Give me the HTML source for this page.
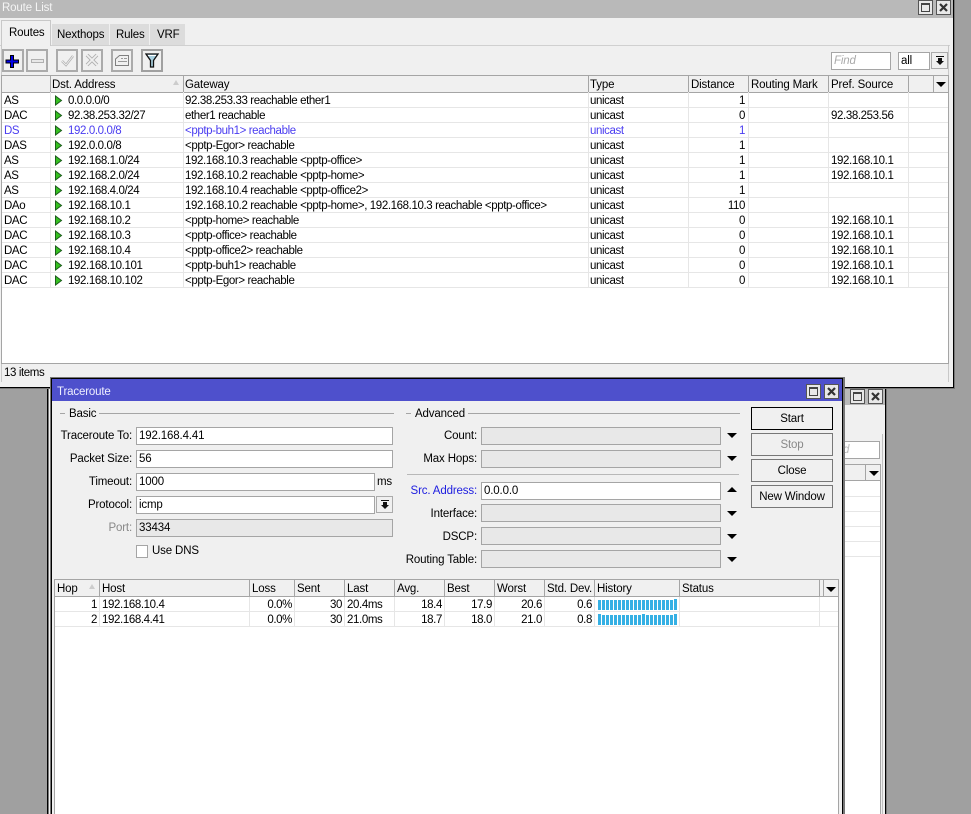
<!DOCTYPE html>
<html><head><meta charset="utf-8"><style>
html,body{margin:0;padding:0;width:971px;height:814px;overflow:hidden;background:#a0a0a0}
body{position:relative;font:11.5px/15px "Liberation Sans",sans-serif;color:#000;letter-spacing:-.39px}
div,span,svg{position:absolute;box-sizing:border-box}
span{white-space:nowrap}
.r{text-align:right}
.z{letter-spacing:-.15px}
.hl{height:1px;background:#e6e6e6}
.vl{width:1px;background:#e6e6e6}
.gv{width:1px;background:#a5a5a5}
.gh{height:1px;background:#a5a5a5}
.bb{background:#f0f0f0;border:2px solid #ababab}
.wb{background:#e8e8e8;border:1px solid #555;width:15px;height:15px;box-shadow:inset 0 0 0 1px #e8e8e8}
.inp{background:#fff;border:1px solid #a5a5a5;height:18px;padding-left:2px;line-height:16px;letter-spacing:-.15px}
.dis{background:#e8e8e8}
.lab{text-align:right;width:130px;letter-spacing:-.15px}
.btn{left:751px;width:82px;height:23px;background:#f0f0f0;border:1px solid #777;text-align:center;line-height:23px;letter-spacing:-.15px}
.ad{left:727px;width:0;height:0;border-left:5px solid transparent;border-right:5px solid transparent;border-top:5px solid #000}
.au{left:727px;width:0;height:0;border-left:5px solid transparent;border-right:5px solid transparent;border-bottom:5px solid #000}
.bl{color:#4a3df0}
.hb{background:#f0f0f0;height:17px}
</style></head><body>

<svg width="0" height="0" style="left:0;top:0"><defs>
<path id="t" d="M0.500 0.500v9l6-4.500z" fill="#35c020" stroke="#1c5c1c" stroke-width="1"/>
<g id="mx"><rect x="2.500" y="2.500" width="8" height="8" fill="none" stroke="#444"/><path d="M2 3h9" stroke="#444" stroke-width="2"/></g>
<path id="cx" d="M3 3l7 7M10 3l-7 7" fill="none" stroke="#333" stroke-width="2.200"/>
</defs></svg>

<!-- back window -->
<div style="left:47px;top:388px;width:840px;height:426px;background:#f0f0f0"></div>
<div style="left:47px;top:388px;width:1px;height:426px;background:#000"></div>
<div style="left:48px;top:388px;width:1px;height:426px;background:#777"></div>
<div style="left:885px;top:388px;width:1px;height:426px;background:#000"></div>
<div style="left:886px;top:388px;width:1px;height:426px;background:#777"></div>
<div style="left:843px;top:388px;width:42px;height:17px;background:#b9b9b9"></div>
<div class="wb" style="left:850px;top:389px"><svg style="left:0;top:0" width="13" height="13"><use href="#mx"/></svg></div>
<div class="wb" style="left:868px;top:389px"><svg style="left:0;top:0" width="13" height="13"><use href="#cx"/></svg></div>
<div class="gv" style="left:882px;top:434px;height:380px;background:#c0c0c0"></div>
<div style="left:843px;top:441px;width:37px;height:18px;background:#fff;border:1px solid #a5a5a5;border-left:0"><span style="left:0;top:1px;color:#bbb;font-style:italic">d</span></div>
<div style="left:843px;top:464px;width:38px;height:350px;background:#fff;border-right:1px solid #a5a5a5"></div>
<div style="left:843px;top:464px;width:38px;height:17px;background:#f0f0f0;border:1px solid #a5a5a5;border-left:0"></div>
<div class="gv" style="left:865px;top:464px;height:17px"></div>
<div style="left:869px;top:471px;width:0;height:0;border-left:5px solid transparent;border-right:5px solid transparent;border-top:5px solid #000"></div>
<div class="hl" style="left:843px;top:496px;width:37px"></div>
<div class="hl" style="left:843px;top:511px;width:37px"></div>
<div class="hl" style="left:843px;top:526px;width:37px"></div>
<div class="hl" style="left:843px;top:541px;width:37px"></div>
<div class="hl" style="left:843px;top:556px;width:37px"></div>

<!-- route list window -->
<div style="left:0;top:0;width:955px;height:389px;background:#777"></div>
<div style="left:0;top:0;width:954px;height:388px;background:#000"></div>
<div style="left:0;top:0;width:953px;height:387px;background:#f0f0f0"></div>
<div style="left:0;top:0;width:953px;height:18px;background:#b9b9b9"></div>
<span class="z" style="left:2px;top:1px;color:#f4f4f4">Route List</span>
<div class="wb" style="left:918px;top:0"><svg style="left:0;top:0" width="13" height="13"><use href="#mx"/></svg></div>
<div class="wb" style="left:936px;top:0"><svg style="left:0;top:0" width="13" height="13"><use href="#cx"/></svg></div>

<!-- tabs -->
<div class="gh" style="left:0;top:45px;width:950px;background:#d0d0d0"></div>
<div class="gv" style="left:948px;top:45px;height:337px;background:#c8c8c8"></div>
<div class="gv" style="left:1px;top:45px;height:337px;background:#c8c8c8"></div>
<div style="left:1px;top:20px;width:50px;height:26px;background:#f0f0f0;border:1px solid #c8c8c8;border-bottom:0"></div>
<span class="z" style="left:9px;top:26px">Routes</span>
<div style="left:52px;top:24px;width:57px;height:21px;background:#dcdcdc"></div>
<span class="z" style="left:57px;top:28px">Nexthops</span>
<div style="left:110px;top:24px;width:39px;height:21px;background:#dcdcdc"></div>
<span class="z" style="left:116px;top:28px">Rules</span>
<div style="left:150px;top:24px;width:35px;height:21px;background:#dcdcdc"></div>
<span class="z" style="left:157px;top:28px">VRF</span>

<!-- toolbar -->
<div class="bb" style="left:2px;top:49px;width:22px;height:23px"></div>
<svg style="left:5px;top:54px" width="15" height="15"><path d="M5.500 1.500h3v4.500h5v3h-5v4.500h-3v-4.500h-4.500v-3h4.500z" fill="#0000e6" stroke="#000"/></svg>
<div class="bb" style="left:26px;top:49px;width:22px;height:23px"></div>
<div style="left:31px;top:59px;width:13px;height:4px;background:#e8e8e8;border:1px solid #b0b0b0"></div>
<div class="bb" style="left:56px;top:49px;width:22px;height:23px"></div>
<svg style="left:60px;top:53px" width="15" height="15"><path d="M2 8l4 4 7-9" fill="none" stroke="#b0b0b0" stroke-width="2.400"/><path d="M2 8l4 4 7-9" fill="none" stroke="#f0f0f0" stroke-width=".9"/></svg>
<div class="bb" style="left:81px;top:49px;width:22px;height:23px"></div>
<svg style="left:85px;top:53px" width="15" height="15"><path d="M2 2l10 10M12 2L2 12" fill="none" stroke="#b0b0b0" stroke-width="3.600"/><path d="M2 2l10 10M12 2L2 12" fill="none" stroke="#f0f0f0" stroke-width="1.800"/></svg>
<div class="bb" style="left:111px;top:49px;width:22px;height:23px"></div>
<svg style="left:114px;top:54px" width="16" height="13"><path d="M1.500 11.500V5l4-3.500h9v10z" fill="#f0f0f0" stroke="#808080"/><path d="M7 4.500h2M10 4.500h3M4 7.500h9" stroke="#999"/></svg>
<div class="bb" style="left:141px;top:49px;width:22px;height:23px;border-color:#a0a0a0"></div>
<svg style="left:145px;top:53px" width="15" height="16"><path d="M1 1h12L8.500 7.500V14h-3V7.500z" fill="#a8d0e0" stroke="#111" stroke-width="1.300"/><path d="M3 2.500h8" stroke="#fff"/></svg>

<div class="inp" style="left:831px;top:52px;width:60px;color:#aaa;font-style:italic">Find</div>
<div class="inp" style="left:898px;top:52px;width:32px">all</div>
<div class="bb" style="left:931px;top:52px;width:17px;height:17px;border-width:1px"></div>
<svg style="left:935px;top:56px" width="10" height="10"><path d="M1 0h8v1H1zM3 2h4v3h2L5 9 1 5h2z" fill="#111"/></svg>

<!-- route table -->
<div style="left:1px;top:75px;width:948px;height:289px;background:#fff;border:1px solid #a5a5a5"></div>
<div class="hb" style="left:2px;top:76px;width:946px"></div>
<div class="gh" style="left:2px;top:92px;width:946px"></div>
<div class="gv" style="left:50px;top:76px;height:16px"></div>
<div class="gv" style="left:183px;top:76px;height:16px"></div>
<div class="gv" style="left:588px;top:76px;height:16px"></div>
<div class="gv" style="left:688px;top:76px;height:16px"></div>
<div class="gv" style="left:748px;top:76px;height:16px"></div>
<div class="gv" style="left:828px;top:76px;height:16px"></div>
<div class="gv" style="left:908px;top:76px;height:16px"></div>
<div class="gv" style="left:933px;top:76px;height:16px"></div>
<span class="z" style="left:52px;top:78px">Dst. Address</span>
<div style="left:173px;top:80px;width:0;height:0;border-left:3px solid transparent;border-right:3px solid transparent;border-bottom:5px solid #ccc"></div>
<span class="z" style="left:185px;top:78px">Gateway</span>
<span class="z" style="left:590px;top:78px">Type</span>
<span class="z" style="left:691px;top:78px">Distance</span>
<span class="z" style="left:751px;top:78px">Routing Mark</span>
<span class="z" style="left:831px;top:78px">Pref. Source</span>
<div style="left:936px;top:82px;width:0;height:0;border-left:5px solid transparent;border-right:5px solid transparent;border-top:5px solid #000"></div>

<div class="hl" style="left:2px;top:107px;width:946px"></div>
<div class="hl" style="left:2px;top:122px;width:946px"></div>
<div class="hl" style="left:2px;top:137px;width:946px"></div>
<div class="hl" style="left:2px;top:152px;width:946px"></div>
<div class="hl" style="left:2px;top:167px;width:946px"></div>
<div class="hl" style="left:2px;top:182px;width:946px"></div>
<div class="hl" style="left:2px;top:197px;width:946px"></div>
<div class="hl" style="left:2px;top:212px;width:946px"></div>
<div class="hl" style="left:2px;top:227px;width:946px"></div>
<div class="hl" style="left:2px;top:242px;width:946px"></div>
<div class="hl" style="left:2px;top:257px;width:946px"></div>
<div class="hl" style="left:2px;top:272px;width:946px"></div>
<div class="hl" style="left:2px;top:287px;width:946px"></div>
<div class="vl" style="left:50px;top:92px;height:195px"></div>
<div class="vl" style="left:183px;top:92px;height:195px"></div>
<div class="vl" style="left:588px;top:92px;height:195px"></div>
<div class="vl" style="left:688px;top:92px;height:195px"></div>
<div class="vl" style="left:748px;top:92px;height:195px"></div>
<div class="vl" style="left:828px;top:92px;height:195px"></div>
<div class="vl" style="left:908px;top:92px;height:195px"></div>

<svg style="left:55px;top:95px" width="8" height="195"><use href="#t" y="0.500"/><use href="#t" y="15.500"/><use href="#t" y="30.500"/><use href="#t" y="45.500"/><use href="#t" y="60.500"/><use href="#t" y="75.500"/><use href="#t" y="90.500"/><use href="#t" y="105.500"/><use href="#t" y="120.500"/><use href="#t" y="135.500"/><use href="#t" y="150.500"/><use href="#t" y="165.500"/><use href="#t" y="180.500"/></svg>

<span style="left:4px;top:94px">AS</span><span style="left:68px;top:94px">0.0.0.0/0</span><span style="left:185px;top:94px">92.38.253.33 reachable ether1</span><span style="left:590px;top:94px">unicast</span><span class="r" style="left:700px;width:45px;top:94px">1</span>
<span style="left:4px;top:109px">DAC</span><span style="left:68px;top:109px">92.38.253.32/27</span><span style="left:185px;top:109px">ether1 reachable</span><span style="left:590px;top:109px">unicast</span><span class="r" style="left:700px;width:45px;top:109px">0</span><span style="left:831px;top:109px">92.38.253.56</span>
<span class="bl" style="left:4px;top:124px">DS</span><span class="bl" style="left:68px;top:124px">192.0.0.0/8</span><span class="bl" style="left:185px;top:124px">&lt;pptp-buh1&gt; reachable</span><span class="bl" style="left:590px;top:124px">unicast</span><span class="r bl" style="left:700px;width:45px;top:124px">1</span>
<span style="left:4px;top:139px">DAS</span><span style="left:68px;top:139px">192.0.0.0/8</span><span style="left:185px;top:139px">&lt;pptp-Egor&gt; reachable</span><span style="left:590px;top:139px">unicast</span><span class="r" style="left:700px;width:45px;top:139px">1</span>
<span style="left:4px;top:154px">AS</span><span style="left:68px;top:154px">192.168.1.0/24</span><span style="left:185px;top:154px">192.168.10.3 reachable &lt;pptp-office&gt;</span><span style="left:590px;top:154px">unicast</span><span class="r" style="left:700px;width:45px;top:154px">1</span><span style="left:831px;top:154px">192.168.10.1</span>
<span style="left:4px;top:169px">AS</span><span style="left:68px;top:169px">192.168.2.0/24</span><span style="left:185px;top:169px">192.168.10.2 reachable &lt;pptp-home&gt;</span><span style="left:590px;top:169px">unicast</span><span class="r" style="left:700px;width:45px;top:169px">1</span><span style="left:831px;top:169px">192.168.10.1</span>
<span style="left:4px;top:184px">AS</span><span style="left:68px;top:184px">192.168.4.0/24</span><span style="left:185px;top:184px">192.168.10.4 reachable &lt;pptp-office2&gt;</span><span style="left:590px;top:184px">unicast</span><span class="r" style="left:700px;width:45px;top:184px">1</span>
<span style="left:4px;top:199px">DAo</span><span style="left:68px;top:199px">192.168.10.1</span><span style="left:185px;top:199px">192.168.10.2 reachable &lt;pptp-home&gt;, 192.168.10.3 reachable &lt;pptp-office&gt;</span><span style="left:590px;top:199px">unicast</span><span class="r" style="left:700px;width:45px;top:199px">110</span>
<span style="left:4px;top:214px">DAC</span><span style="left:68px;top:214px">192.168.10.2</span><span style="left:185px;top:214px">&lt;pptp-home&gt; reachable</span><span style="left:590px;top:214px">unicast</span><span class="r" style="left:700px;width:45px;top:214px">0</span><span style="left:831px;top:214px">192.168.10.1</span>
<span style="left:4px;top:229px">DAC</span><span style="left:68px;top:229px">192.168.10.3</span><span style="left:185px;top:229px">&lt;pptp-office&gt; reachable</span><span style="left:590px;top:229px">unicast</span><span class="r" style="left:700px;width:45px;top:229px">0</span><span style="left:831px;top:229px">192.168.10.1</span>
<span style="left:4px;top:244px">DAC</span><span style="left:68px;top:244px">192.168.10.4</span><span style="left:185px;top:244px">&lt;pptp-office2&gt; reachable</span><span style="left:590px;top:244px">unicast</span><span class="r" style="left:700px;width:45px;top:244px">0</span><span style="left:831px;top:244px">192.168.10.1</span>
<span style="left:4px;top:259px">DAC</span><span style="left:68px;top:259px">192.168.10.101</span><span style="left:185px;top:259px">&lt;pptp-buh1&gt; reachable</span><span style="left:590px;top:259px">unicast</span><span class="r" style="left:700px;width:45px;top:259px">0</span><span style="left:831px;top:259px">192.168.10.1</span>
<span style="left:4px;top:274px">DAC</span><span style="left:68px;top:274px">192.168.10.102</span><span style="left:185px;top:274px">&lt;pptp-Egor&gt; reachable</span><span style="left:590px;top:274px">unicast</span><span class="r" style="left:700px;width:45px;top:274px">0</span><span style="left:831px;top:274px">192.168.10.1</span>
<span style="left:4px;top:366px">13 items</span>

<!-- traceroute window -->
<div style="left:50px;top:377px;width:795px;height:437px;background:#777"></div>
<div style="left:51px;top:378px;width:792px;height:436px;background:#f0f0f0;border:1px solid #000;border-bottom:0"></div>
<div style="left:52px;top:379px;width:790px;height:22px;background:#4e50cc"></div>
<span class="z" style="left:57px;top:385px;color:#eef">Traceroute</span>
<div class="wb" style="left:806px;top:384px"><svg style="left:0;top:0" width="13" height="13"><use href="#mx"/></svg></div>
<div class="wb" style="left:824px;top:384px"><svg style="left:0;top:0" width="13" height="13"><use href="#cx"/></svg></div>

<div class="gh" style="left:60px;top:413px;width:5px"></div>
<span class="z" style="left:69px;top:407px">Basic</span>
<div class="gh" style="left:99px;top:413px;width:295px"></div>
<div class="gh" style="left:406px;top:413px;width:5px"></div>
<span class="z" style="left:415px;top:407px">Advanced</span>
<div class="gh" style="left:468px;top:413px;width:272px"></div>

<span class="lab" style="left:2px;top:429px">Traceroute To:</span><div class="inp" style="left:136px;top:427px;width:257px">192.168.4.41</div>
<span class="lab" style="left:2px;top:452px">Packet Size:</span><div class="inp" style="left:136px;top:450px;width:257px">56</div>
<span class="lab" style="left:2px;top:475px">Timeout:</span><div class="inp" style="left:136px;top:473px;width:239px">1000</div><span class="z" style="left:377px;top:475px">ms</span>
<span class="lab" style="left:2px;top:498px">Protocol:</span><div class="inp" style="left:136px;top:496px;width:239px">icmp</div>
<div class="bb" style="left:376px;top:496px;width:17px;height:17px;border-width:1px"></div>
<svg style="left:380px;top:500px" width="10" height="10"><path d="M1 0h8v1H1zM3 2h4v3h2L5 9 1 5h2z" fill="#111"/></svg>
<span class="lab" style="left:2px;top:521px;color:#888">Port:</span><div class="inp dis" style="left:136px;top:519px;width:257px">33434</div>
<div style="left:136px;top:545px;width:12px;height:13px;background:#fff;border:1px solid #a5a5a5"></div>
<span class="z" style="left:152px;top:544px">Use DNS</span>

<span class="lab" style="left:347px;top:429px">Count:</span><div class="inp dis" style="left:481px;top:427px;width:240px"></div><div class="ad" style="top:433px"></div>
<span class="lab" style="left:347px;top:452px">Max Hops:</span><div class="inp dis" style="left:481px;top:450px;width:240px"></div><div class="ad" style="top:456px"></div>
<div class="gh" style="left:407px;top:474px;width:332px;background:#b8b8b8"></div>
<span class="lab" style="left:347px;top:484px;color:#2020e0">Src. Address:</span><div class="inp" style="left:481px;top:482px;width:240px">0.0.0.0</div><div class="au" style="top:487px"></div>
<span class="lab" style="left:347px;top:507px">Interface:</span><div class="inp dis" style="left:481px;top:504px;width:240px"></div><div class="ad" style="top:511px"></div>
<span class="lab" style="left:347px;top:530px">DSCP:</span><div class="inp dis" style="left:481px;top:527px;width:240px"></div><div class="ad" style="top:534px"></div>
<span class="lab" style="left:347px;top:553px">Routing Table:</span><div class="inp dis" style="left:481px;top:550px;width:240px"></div><div class="ad" style="top:557px"></div>

<div class="btn" style="top:407px;border-color:#000">Start</div>
<div class="btn" style="top:433px;color:#888">Stop</div>
<div class="btn" style="top:459px">Close</div>
<div class="btn" style="top:485px">New Window</div>

<!-- hops table -->
<div style="left:54px;top:579px;width:785px;height:235px;background:#fff;border:1px solid #a5a5a5;border-bottom:0"></div>
<div class="hb" style="left:55px;top:580px;width:783px"></div>
<div class="gh" style="left:55px;top:596px;width:783px"></div>
<div class="gv" style="left:99px;top:580px;height:16px"></div>
<div class="gv" style="left:249px;top:580px;height:16px"></div>
<div class="gv" style="left:294px;top:580px;height:16px"></div>
<div class="gv" style="left:344px;top:580px;height:16px"></div>
<div class="gv" style="left:394px;top:580px;height:16px"></div>
<div class="gv" style="left:444px;top:580px;height:16px"></div>
<div class="gv" style="left:494px;top:580px;height:16px"></div>
<div class="gv" style="left:544px;top:580px;height:16px"></div>
<div class="gv" style="left:594px;top:580px;height:16px"></div>
<div class="gv" style="left:679px;top:580px;height:16px"></div>
<div class="gv" style="left:819px;top:580px;height:16px"></div>
<div class="gv" style="left:823px;top:580px;height:16px"></div>
<span class="z" style="left:57px;top:582px">Hop</span>
<div style="left:89px;top:584px;width:0;height:0;border-left:3px solid transparent;border-right:3px solid transparent;border-bottom:5px solid #ccc"></div>
<span class="z" style="left:102px;top:582px">Host</span>
<span class="z" style="left:252px;top:582px">Loss</span>
<span class="z" style="left:297px;top:582px">Sent</span>
<span class="z" style="left:347px;top:582px">Last</span>
<span class="z" style="left:397px;top:582px">Avg.</span>
<span class="z" style="left:447px;top:582px">Best</span>
<span class="z" style="left:497px;top:582px">Worst</span>
<span class="z" style="left:547px;top:582px">Std. Dev.</span>
<span class="z" style="left:597px;top:582px">History</span>
<span class="z" style="left:682px;top:582px">Status</span>
<div style="left:826px;top:587px;width:0;height:0;border-left:5px solid transparent;border-right:5px solid transparent;border-top:5px solid #000"></div>

<div class="hl" style="left:55px;top:611px;width:783px"></div>
<div class="hl" style="left:55px;top:626px;width:783px"></div>
<div class="vl" style="left:99px;top:597px;height:29px"></div>
<div class="vl" style="left:249px;top:597px;height:29px"></div>
<div class="vl" style="left:294px;top:597px;height:29px"></div>
<div class="vl" style="left:344px;top:597px;height:29px"></div>
<div class="vl" style="left:394px;top:597px;height:29px"></div>
<div class="vl" style="left:444px;top:597px;height:29px"></div>
<div class="vl" style="left:494px;top:597px;height:29px"></div>
<div class="vl" style="left:544px;top:597px;height:29px"></div>
<div class="vl" style="left:594px;top:597px;height:29px"></div>
<div class="vl" style="left:679px;top:597px;height:29px"></div>
<div class="vl" style="left:819px;top:597px;height:29px"></div>

<span class="r" style="left:67px;width:30px;top:598px">1</span><span style="left:102px;top:598px">192.168.10.4</span><span class="r" style="left:252px;width:40px;top:598px">0.0%</span><span class="r" style="left:302px;width:40px;top:598px">30</span><span style="left:347px;top:598px">20.4ms</span><span class="r" style="left:402px;width:40px;top:598px">18.4</span><span class="r" style="left:452px;width:40px;top:598px">17.9</span><span class="r" style="left:502px;width:40px;top:598px">20.6</span><span class="r" style="left:552px;width:40px;top:598px">0.6</span>
<span class="r" style="left:67px;width:30px;top:613px">2</span><span style="left:102px;top:613px">192.168.4.41</span><span class="r" style="left:252px;width:40px;top:613px">0.0%</span><span class="r" style="left:302px;width:40px;top:613px">30</span><span style="left:347px;top:613px">21.0ms</span><span class="r" style="left:402px;width:40px;top:613px">18.7</span><span class="r" style="left:452px;width:40px;top:613px">18.0</span><span class="r" style="left:502px;width:40px;top:613px">21.0</span><span class="r" style="left:552px;width:40px;top:613px">0.8</span>

<div style="left:598px;top:600px;width:75px;height:10px;background:repeating-linear-gradient(90deg,#35b0e4 0 3px,#fff 3px 4px)"></div>
<div style="left:674px;top:599px;width:3px;height:11px;background:#35b0e4"></div>
<div style="left:598px;top:615px;width:79px;height:10px;background:repeating-linear-gradient(90deg,#35b0e4 0 3px,#fff 3px 4px)"></div>
<div style="left:598px;top:614px;width:3px;height:1px;background:#35b0e4"></div>
<div style="left:642px;top:614px;width:3px;height:1px;background:#35b0e4"></div>
<div style="left:674px;top:614px;width:3px;height:1px;background:#35b0e4"></div>

</body></html>
